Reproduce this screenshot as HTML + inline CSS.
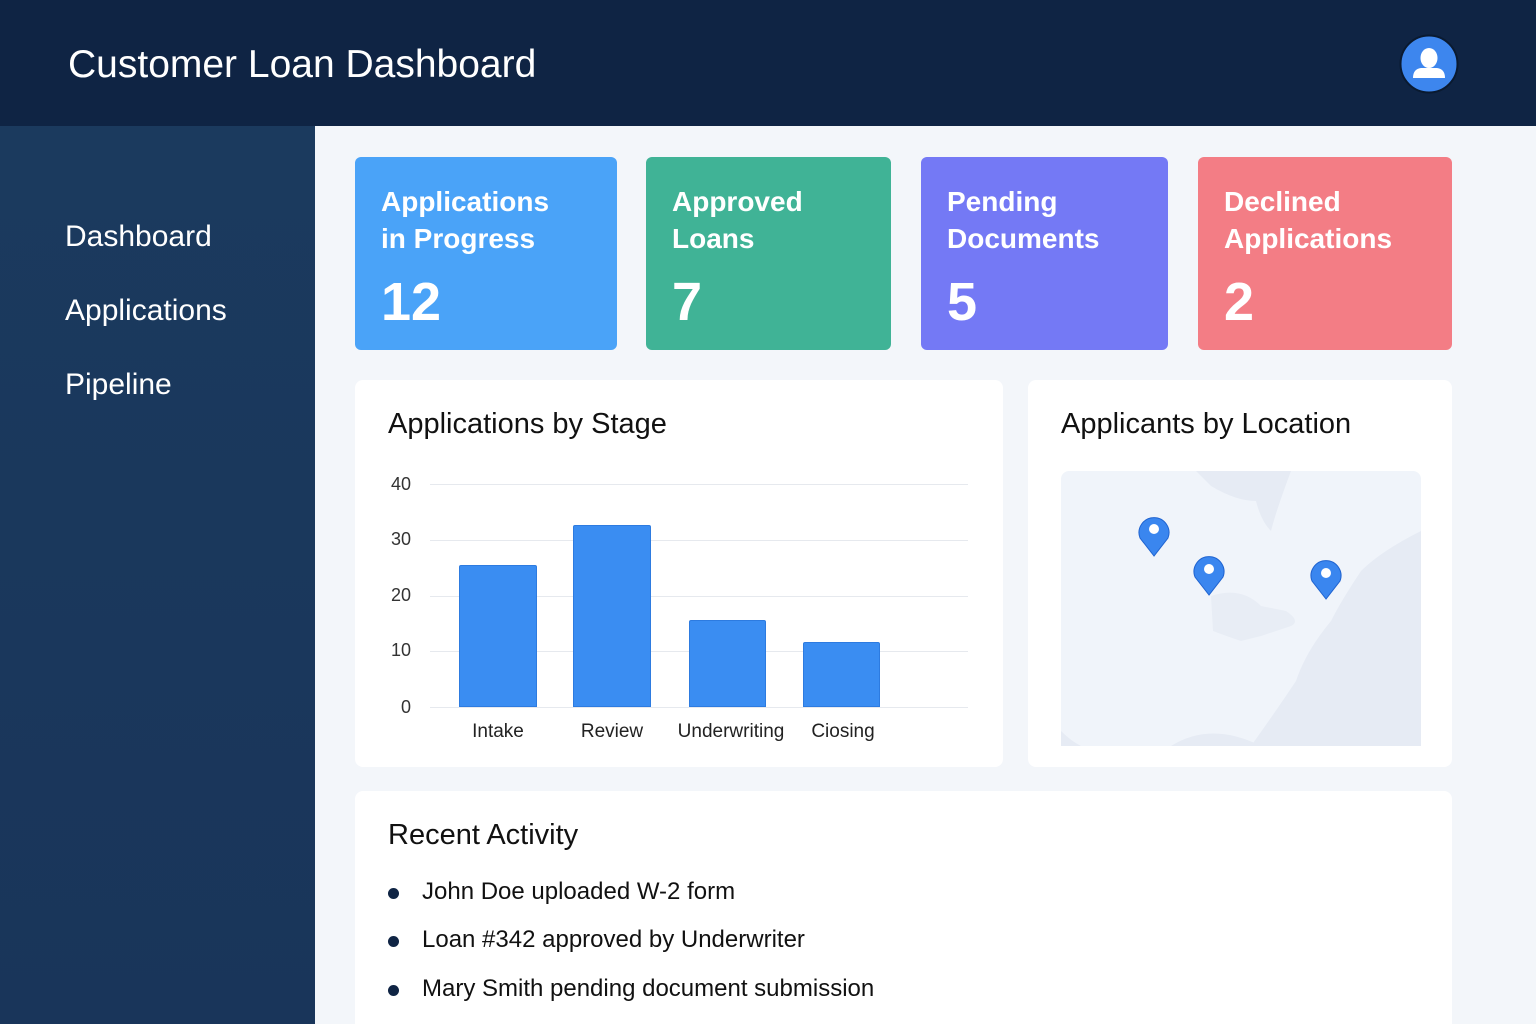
<!DOCTYPE html>
<html><head><style>
*{margin:0;padding:0;box-sizing:border-box}
html,body{width:1536px;height:1024px;overflow:hidden}
body{font-family:"Liberation Sans",sans-serif;background:#f3f6fa;position:relative}
.hdr{position:absolute;left:0;top:0;width:1536px;height:126px;background:#0f2444}
.hdr h1{position:absolute;left:68px;top:43px;color:#fff;font-weight:400;font-size:39px}
.side{position:absolute;left:0;top:126px;width:315px;height:898px;background:linear-gradient(180deg,#1b3a5e,#19355a)}
.side div{position:absolute;left:65px;color:#fff;font-size:30px}
.card{position:absolute;top:157px;height:193px;border-radius:6px;color:#fff}
.card .t{position:absolute;left:26px;top:26px;font-size:28px;line-height:37px;font-weight:700}
.card .n{position:absolute;left:26px;top:114px;font-size:54px;font-weight:700}
.panel{position:absolute;background:#fff;border-radius:8px}
.panel h2{position:absolute;left:33px;top:28px;font-size:29px;font-weight:400;color:#111}
.yl{position:absolute;font-size:18px;color:#333;width:30px;text-align:right}
.gl{position:absolute;left:430px;width:538px;height:1px;background:#e6e9ee}
.bar{position:absolute;background:#3a8df2;border:1px solid #2d7be0;border-radius:2px 2px 0 0}
.xl{position:absolute;top:721px;font-size:19px;color:#222;text-align:center;width:140px}
.li{position:absolute;left:422px;font-size:24px;color:#111}
.dot{position:absolute;left:388px;width:11px;height:11px;border-radius:50%;background:#0f2444}
</style></head><body>
<div class="hdr"><h1>Customer Loan Dashboard</h1>
<svg style="position:absolute;left:1399px;top:34px" width="60" height="60" viewBox="0 0 60 60"><circle cx="30" cy="30" r="28.5" fill="#3d86ee" stroke="#0a1a30" stroke-width="2"/><ellipse cx="30" cy="24" rx="8.5" ry="10" fill="#fff"/><path d="M14 44 Q14 35 22 34 L38 34 Q46 35 46 44 Z" fill="#fff"/></svg>
</div>
<div class="side"><div style="top:94px">Dashboard</div><div style="top:168px">Applications</div><div style="top:242px">Pipeline</div></div>
<div class="card" style="left:355px;width:262px;background:#4aa3f8"><div class="t">Applications<br>in Progress</div><div class="n">12</div></div>
<div class="card" style="left:646px;width:245px;background:#40b396"><div class="t">Approved<br>Loans</div><div class="n">7</div></div>
<div class="card" style="left:921px;width:247px;background:#7479f5"><div class="t">Pending<br>Documents</div><div class="n">5</div></div>
<div class="card" style="left:1198px;width:254px;background:#f37d85"><div class="t">Declined<br>Applications</div><div class="n">2</div></div>
<div class="panel" style="left:355px;top:380px;width:648px;height:387px"><h2>Applications by Stage</h2></div>
<div class="yl" style="left:381px;top:474px">40</div><div class="gl" style="top:484px"></div>
<div class="yl" style="left:381px;top:529px">30</div><div class="gl" style="top:540px"></div>
<div class="yl" style="left:381px;top:585px">20</div><div class="gl" style="top:596px"></div>
<div class="yl" style="left:381px;top:640px">10</div><div class="gl" style="top:651px"></div>
<div class="yl" style="left:381px;top:697px">0</div><div class="gl" style="top:707px"></div>
<div class="bar" style="left:459px;top:565px;width:78px;height:142px"></div>
<div class="bar" style="left:573px;top:525px;width:78px;height:182px"></div>
<div class="bar" style="left:689px;top:620px;width:77px;height:87px"></div>
<div class="bar" style="left:803px;top:642px;width:77px;height:65px"></div>
<div class="xl" style="left:428px">Intake</div><div class="xl" style="left:542px">Review</div><div class="xl" style="left:661px">Underwriting</div><div class="xl" style="left:773px">Ciosing</div>
<div class="panel" style="left:1028px;top:380px;width:424px;height:387px"><h2>Applicants by Location</h2>
<svg style="position:absolute;left:33px;top:91px" width="360" height="275" viewBox="0 0 360 275"><rect width="360" height="275" rx="8" fill="#f0f4fa"/>
<path d="M135 0 L230 0 Q215 40 210 60 Q200 50 195 30 Q175 30 150 15 Z" fill="#e6ebf4"/>
<path d="M150 125 Q180 115 200 135 L225 140 Q240 150 230 155 L200 165 L180 170 Q165 165 152 160 Z" fill="#e8edf5"/>
<path d="M360 60 Q320 80 300 100 Q280 130 270 150 Q245 180 235 210 Q215 240 190 275 L360 275 Z" fill="#e6ebf4"/>
<path d="M0 260 Q10 270 20 275 L0 275Z M110 275 Q150 250 200 275Z" fill="#e6ebf4"/>
<g fill="#3a86ef" stroke="#1f63d0" stroke-width="1"><path d="M93 85 L79 67 A15 15 0 1 1 107 67 Z"/><path d="M148 124 L134 106 A15 15 0 1 1 162 106 Z"/><path d="M265 128 L251 110 A15 15 0 1 1 279 110 Z"/></g>
<g fill="#fff"><circle cx="93" cy="58" r="5"/><circle cx="148" cy="98" r="5"/><circle cx="265" cy="102" r="5"/></g></svg></div>
<div class="panel" style="left:355px;top:791px;width:1097px;height:233px;border-radius:8px 8px 0 0"><h2>Recent Activity</h2></div>
<div class="dot" style="top:888px"></div><div class="li" style="top:878px">John Doe uploaded W-2 form</div>
<div class="dot" style="top:936px"></div><div class="li" style="top:926px">Loan #342 approved by Underwriter</div>
<div class="dot" style="top:985px"></div><div class="li" style="top:975px">Mary Smith pending document submission</div>
</body></html>
